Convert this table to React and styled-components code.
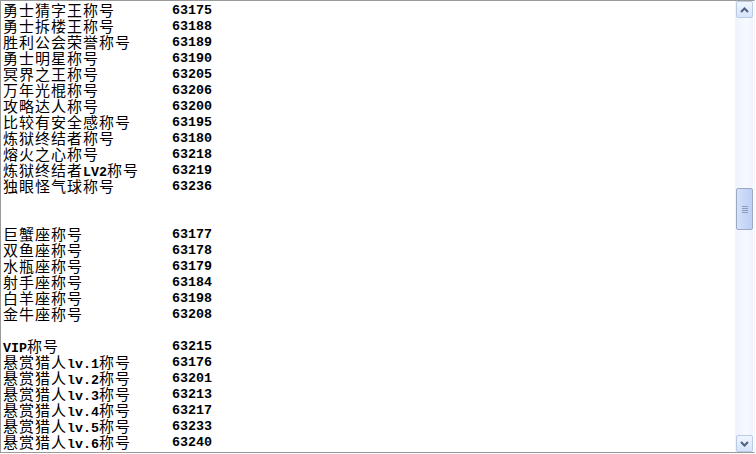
import React from 'react';
import styled, { createGlobalStyle } from 'styled-components';

const GlobalStyle = createGlobalStyle`
  html, body {
    margin: 0;
    padding: 0;
    background: #ffffff;
  }
`

const rows = [
  ['勇士猜字王称号', '63175'],
  ['勇士拆楼王称号', '63188'],
  ['胜利公会荣誉称号', '63189'],
  ['勇士明星称号', '63190'],
  ['冥界之王称号', '63205'],
  ['万年光棍称号', '63206'],
  ['攻略达人称号', '63200'],
  ['比较有安全感称号', '63195'],
  ['炼狱终结者称号', '63180'],
  ['熔火之心称号', '63218'],
  ['炼狱终结者LV2称号', '63219'],
  ['独眼怪气球称号', '63236'],
  null,
  null,
  ['巨蟹座称号', '63177'],
  ['双鱼座称号', '63178'],
  ['水瓶座称号', '63179'],
  ['射手座称号', '63184'],
  ['白羊座称号', '63198'],
  ['金牛座称号', '63208'],
  null,
  ['VIP称号', '63215'],
  ['悬赏猎人lv.1称号', '63176'],
  ['悬赏猎人lv.2称号', '63201'],
  ['悬赏猎人lv.3称号', '63213'],
  ['悬赏猎人lv.4称号', '63217'],
  ['悬赏猎人lv.5称号', '63233'],
  ['悬赏猎人lv.6称号', '63240'],
]

// split latin runs so they get the bitmap-ish mono face
const renderName = (name) =>
  name.split(/([A-Za-z0-9.]+)/).filter(Boolean).map((part, i) =>
    /[A-Za-z0-9.]/.test(part) ? <Latin key={i}>{part}</Latin> : <Han key={i}>{part}</Han>
  )

export default () => {
  return (
    <>
      <GlobalStyle />
      <Frame>
        <Content>
          {rows.map((row, i) => (
            row ? (
              <Row key={i}>
                <Name>{renderName(row[0])}</Name>
                <Code>{row[1]}</Code>
              </Row>
            ) : <Row key={i} />
          ))}
        </Content>
        <ScrollBar>
          <ArrowButton>
            <svg width="9" height="6" viewBox="0 0 9 6">
              <path d="M1 5 L4.5 1.5 L8 5" fill="none" stroke="#4d6185" strokeWidth="2" />
            </svg>
          </ArrowButton>
          <Track>
            <Thumb offset={170}>
              <Grip>
                <span /><span /><span /><span />
              </Grip>
            </Thumb>
          </Track>
          <ArrowButton>
            <svg width="9" height="6" viewBox="0 0 9 6">
              <path d="M1 1 L4.5 4.5 L8 1" fill="none" stroke="#4d6185" strokeWidth="2" />
            </svg>
          </ArrowButton>
        </ScrollBar>
      </Frame>
    </>
  )
}

const Frame = styled.div`
  width: 755px;
  height: 453px;
  box-sizing: border-box;
  border-top: 1px solid #9a9a9a;
  border-left: 1px solid #9a9a9a;
  border-bottom: 1px solid #9a9a9a;
  border-right: 1px solid #f4f4f4;
  display: flex;
  flex-direction: row;
  background: #ffffff;
  overflow: hidden;
`

const Content = styled.div`
  flex: 1;
  padding: 1px 0 0 2px;
  overflow: hidden;
`

const Row = styled.div`
  display: grid;
  grid-template-columns: 169px auto;
  align-items: end;
  height: 16px;
  color: #000000;
  white-space: nowrap;
`

const Name = styled.div`
  height: 16px;
  line-height: 16px;
  overflow: visible;
`

const Han = styled.span`
  font-family: "Noto Sans CJK SC", "Liberation Sans", sans-serif;
  font-size: 15px;
  letter-spacing: 1px;
  line-height: 16px;
`

const Latin = styled.span`
  font-family: "Liberation Mono", monospace;
  font-weight: bold;
  font-size: 13.33px;
  line-height: 16px;
`

const Code = styled.div`
  font-family: "Liberation Mono", monospace;
  font-weight: bold;
  font-size: 13.33px;
  line-height: 16px;
  height: 16px;
  padding-top: 1px;
  box-sizing: border-box;
`

const ScrollBar = styled.div`
  width: 17px;
  margin-right: 1px;
  display: flex;
  flex-direction: column;
  background: linear-gradient(to right, #eef3fd, #f7f9fe 60%, #eef3fd);
  border-left: 1px solid #f0f3fa;
`

const ArrowButton = styled.div`
  width: 17px;
  height: 17px;
  box-sizing: border-box;
  border: 1px solid #bacbe6;
  border-radius: 2px;
  background: linear-gradient(to bottom, #f1f6ff, #d6e3fb);
  display: flex;
  align-items: center;
  justify-content: center;
`

const Track = styled.div`
  flex: 1;
  display: flex;
  flex-direction: column;
`

const Thumb = styled.div`
  margin-top: ${p => p.offset}px;
  height: 42px;
  box-sizing: border-box;
  border: 1px solid #9aa8c0;
  border-radius: 2px;
  background: linear-gradient(to right, #d6e2fb, #c6d7f8 50%, #bccff5);
  display: flex;
  align-items: center;
  justify-content: center;
`

const Grip = styled.div`
  display: flex;
  flex-direction: column;
  gap: 1px;

  span {
    display: block;
    width: 6px;
    height: 1px;
    background: #8a9bbd;
  }
`
